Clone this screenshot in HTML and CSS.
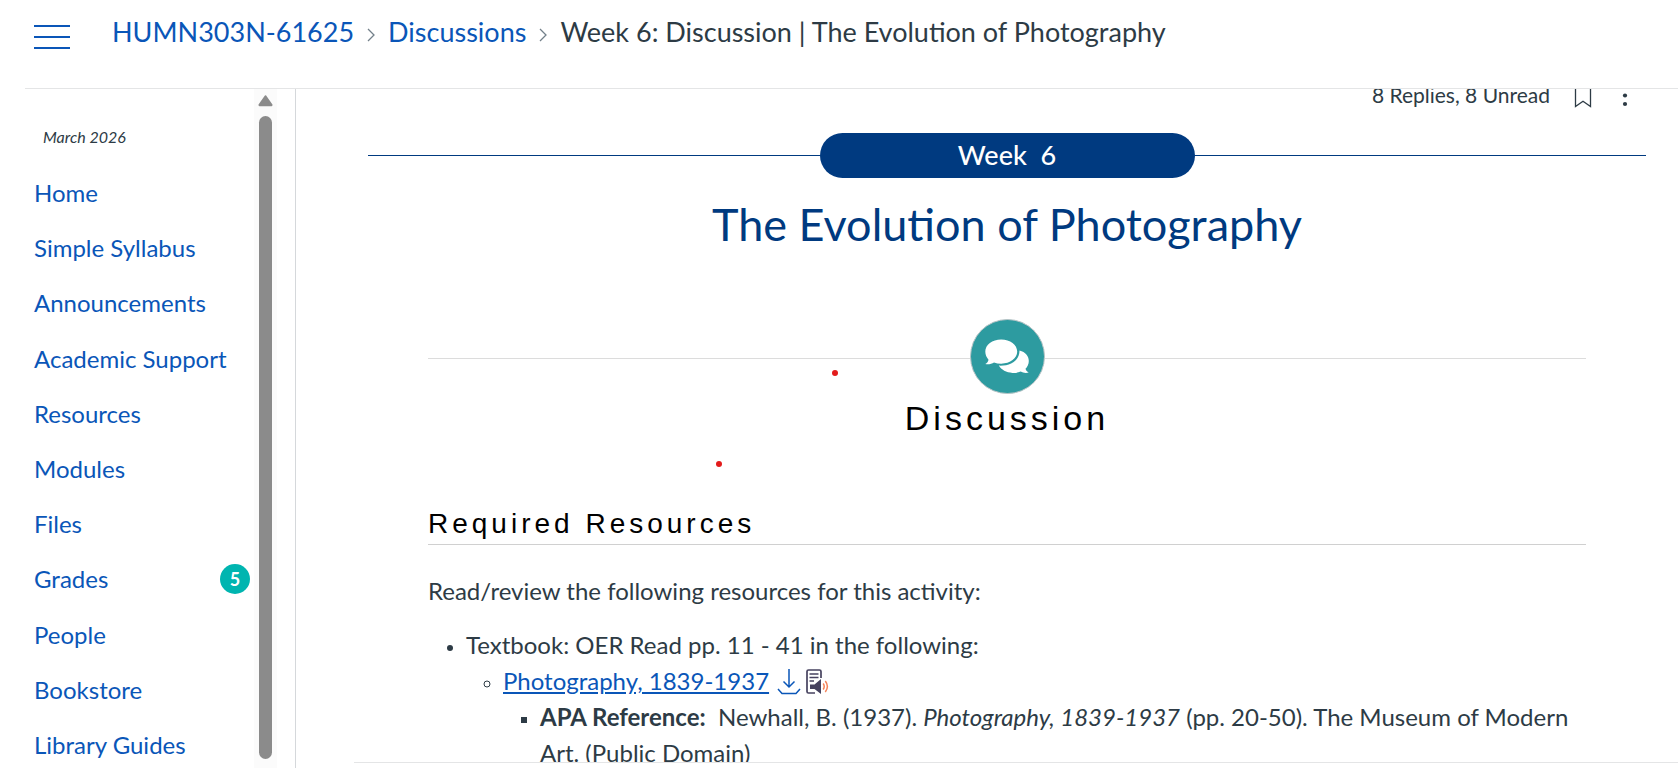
FILE: index.html
```html
<!DOCTYPE html>
<html lang="en">
<head>
<meta charset="utf-8">
<meta name="viewport" content="width=device-width, initial-scale=1">
<title>Week 6: Discussion | The Evolution of Photography</title>
<link rel="stylesheet" href="styles.css">
</head>
<body>
<header class="topbar">
  <button class="menu-button" type="button" aria-label="Toggle course navigation">
    <svg width="36" height="24" viewBox="0 0 36 24" aria-hidden="true"><path d="M0 1h36M0 12h36M0 23h36" stroke="#0a56b8" stroke-width="2"/></svg>
  </button>
  <nav class="crumbs" aria-label="Breadcrumb">
    <a href="#">HUMN303N-61625</a>
    <svg class="crumb-sep" width="8" height="14" viewBox="0 0 8 14" aria-hidden="true"><path d="M1 1l6 6-6 6" fill="none" stroke="#73808a" stroke-width="1.3"/></svg>
    <a href="#">Discussions</a>
    <svg class="crumb-sep" width="8" height="14" viewBox="0 0 8 14" aria-hidden="true"><path d="M1 1l6 6-6 6" fill="none" stroke="#73808a" stroke-width="1.3"/></svg>
    <span>Week 6: Discussion | The Evolution of Photography</span>
  </nav>
</header>
<div class="layout">
  <aside class="sidebar">
    <nav class="course-nav" aria-label="Course">
      <p class="term">March 2026</p>
      <ul class="nav-list">
        <li><a href="#">Home</a></li>
        <li><a href="#">Simple Syllabus</a></li>
        <li><a href="#">Announcements</a></li>
        <li><a href="#">Academic Support</a></li>
        <li><a href="#">Resources</a></li>
        <li><a href="#">Modules</a></li>
        <li><a href="#">Files</a></li>
        <li><a href="#">Grades <span class="count">5</span></a></li>
        <li><a href="#">People</a></li>
        <li><a href="#">Bookstore</a></li>
        <li><a href="#">Library Guides</a></li>
      </ul>
    </nav>
    <div class="scrollbar" aria-hidden="true">
      <svg width="15" height="12" viewBox="0 0 15 12"><path d="M7.5 1.6L13.3 10H1.7z" fill="#8b8b8b" stroke="#8b8b8b" stroke-width="2.4" stroke-linejoin="round"/></svg>
      <div class="thumb"></div>
    </div>
  </aside>
  <main class="content">
    <div class="topic">
      <div class="topic-bar">
        <span>8 Replies, 8 Unread</span>
        <button type="button" aria-label="Subscribe">
          <svg width="18" height="25" viewBox="0 0 18 25"><path d="M1.5 1v22.5L9 18.2l7.5 5.300V1z" fill="none" stroke="#2d3b45" stroke-width="1.3"/></svg>
        </button>
        <button type="button" aria-label="Manage discussion">
          <svg width="6" height="24" viewBox="0 0 6 24"><g fill="#2d3b45"><circle cx="3" cy="3" r="2.100"/><circle cx="3" cy="11.500" r="2.100"/><circle cx="3" cy="20" r="2.100"/></g></svg>
        </button>
      </div>
      <div class="week"><span class="week-pill">Week&nbsp; 6</span></div>
      <h1 class="title">The Evolution of Photography</h1>
      <section class="body">
        <div class="divider">
          <span class="disc">
            <svg width="44" height="35" viewBox="0 0 44 35" aria-hidden="true">
              <path fill="#fff" d="M34.500 11.500C40.500 13 43.800 17 43.800 22c0 3.200-1.300 5.800-3.300 7.800.5 1.600 1.600 2.900 3.200 3.700-2.800 1-5.800.3-8-1-2.600 1.100-5.300 1.600-8.200 1.400-6.200-.3-11.200-3-13.700-7.300 11.700.6 20.800-5.500 20.700-15.100z"/>
              <path fill="#fff" d="M16.200.5c9 0 16 5.300 16 12.100s-7 12.100-16 12.100c-2.600 0-5-.4-7.200-1.200-2.300 1.400-5.300 2.200-8.700 1.600 1.800-1 2.900-2.500 3.200-4.400C1.500 18.500.3 15.700.3 12.600.3 5.800 7.300.5 16.200.5z"/>
            </svg>
          </span>
        </div>
        <h2 class="kind">Discussion</h2>
        <h3 class="section-title">Required Resources</h3>
        <p class="intro">Read/review the following resources for this activity:</p>
        <ul class="resources">
          <li>Textbook: OER Read pp. 11 - 41 in the following:
            <ul>
              <li><a href="#">Photography, 1839-1937</a><button class="file-button download" type="button" aria-label="Download Photography, 1839-1937"><svg width="24" height="26" viewBox="0 0 24 26"><path d="M12 0v18M6.500 12.500L12 18l5.500-5.500M1 20l4 4.500h14l4-4.500" fill="none" stroke="#0a56b8" stroke-width="1.500"/></svg></button><button class="file-button" type="button" aria-label="Alternative formats"><svg width="23" height="26" viewBox="0 0 23 26"><path d="M9 24H2.500A1.500 1.500 0 0 1 1 22.500v-20A1.500 1.500 0 0 1 2.500 1h11A1.500 1.500 0 0 1 15 2.500V9M3.500 5h9M3.500 8.500h9M3.500 12H8" fill="none" stroke="#46425f" stroke-width="1.700"/><path d="M4 15.500h4.500l6.500-5.500v15l-6.500-5H4z" fill="#46425f"/><path d="M17.200 14.500q2 3 0 6M19.300 12q4.200 5.500 0 11" fill="none" stroke="#f58258" stroke-width="1.500"/></svg></button>
                <ul>
                  <li><strong>APA Reference:</strong>&nbsp; Newhall, B. (1937). <em>Photography, 1839-1937</em> (pp. 20-50). The Museum of Modern Art. (Public Domain)</li>
                </ul>
              </li>
            </ul>
          </li>
        </ul>
      </section>
      <span class="mark mark-upper"></span>
      <span class="mark mark-lower"></span>
    </div>
    <div class="content-foot"></div>
  </main>
</div>
</body>
</html>
```
FILE: styles.css
```css
* { box-sizing: border-box; }

body {
  margin: 0;
  height: 100vh;
  display: flex;
  flex-direction: column;
  overflow: hidden;
  background: #fff;
  color: #2d3b45;
  font: 24px/36px Lato, "Liberation Sans", sans-serif;
}

a { color: #0a56b8; text-decoration: none; }
button { padding: 0; border: 0; background: none; cursor: pointer; }
svg { display: block; }
h1, h2, h3, p, ul { margin: 0; padding: 0; font-weight: 400; }

.topbar {
  display: flex;
  align-items: flex-start;
  gap: 42px;
  height: 89px;
  flex: none;
  margin-left: 25px;
  padding: 15px 0 0 9px;
  border-bottom: 1px solid #e4e5e6;
}
.menu-button { margin-top: 10px; }
.crumbs {
  display: flex;
  align-items: center;
  gap: 13px;
  font-size: 27px;
  line-height: 34px;
  white-space: nowrap;
}
.crumb-sep { margin-top: 6px; }

.layout { display: flex; flex: 1; min-height: 0; }

.sidebar {
  display: flex;
  flex: none;
  width: 296px;
  padding-right: 18px;
  border-right: 1px solid #d5d8db;
}
.course-nav {
  display: flex;
  flex-direction: column;
  flex: 1;
  padding: 36px 4px 5px 34px;
}
.term {
  padding-left: 9px;
  margin-bottom: 26px;
  font-size: 16px;
  line-height: 24px;
  font-style: italic;
}
.nav-list {
  display: flex;
  flex-direction: column;
  justify-content: space-between;
  flex: 1;
  list-style: none;
}
.nav-list a {
  display: flex;
  align-items: center;
  justify-content: space-between;
}
.count {
  width: 30px;
  border-radius: 15px;
  background: #00b5b0;
  color: #fff;
  font-size: 18px;
  font-weight: 700;
  line-height: 30px;
  text-align: center;
}
.scrollbar {
  display: flex;
  flex-direction: column;
  align-items: center;
  gap: 9px;
  width: 23px;
  padding: 6px 0 9px;
  background: #fbfbfb;
}
.thumb {
  flex: 1;
  width: 13px;
  border-radius: 7px;
  background: #8b8b8b;
}

.content {
  display: flex;
  flex-direction: column;
  flex: 1;
  min-width: 0;
}
.topic {
  position: relative;
  flex: 1;
  min-height: 0;
  overflow: hidden;
  padding: 0 32px 0 72px;
}
.topic-bar {
  display: flex;
  align-items: flex-end;
  justify-content: flex-end;
  gap: 24px;
  height: 19px;
  padding-right: 18px;
  font-size: 21px;
  line-height: 26px;
}
.topic-bar button:last-child { margin-left: 6px; }
.week {
  display: grid;
  grid-template-columns: 1fr 375px 1fr;
  align-items: center;
  margin-top: 25px;
}
.week::before, .week::after {
  content: "";
  height: 1px;
  background: #003a80;
}
.week-pill {
  padding-bottom: 2px;
  border-radius: 23px;
  background: #003a80;
  color: #fff;
  font-size: 27px;
  font-weight: 500;
  line-height: 43px;
  text-align: center;
}
.title {
  margin-top: 19px;
  color: #003a80;
  font-size: 45px;
  line-height: 54px;
  text-align: center;
}
.body { padding: 0 60px; }
.divider {
  display: grid;
  grid-template-columns: 1fr 75px 1fr;
  align-items: center;
  margin-top: 68px;
}
.divider::before, .divider::after {
  content: "";
  height: 1px;
  margin-top: 4px;
  background: #dcdcdc;
}
.disc {
  display: grid;
  place-items: center;
  height: 75px;
  border: 1px solid #b9c4c6;
  border-radius: 50%;
  background: #2d9ba0;
}
.kind, .section-title {
  color: #000;
  font-family: "Liberation Sans", Arial, sans-serif;
}
.kind {
  margin-top: 2px;
  font-size: 34px;
  line-height: 44px;
  letter-spacing: 4px;
  text-align: center;
}
.section-title {
  margin-top: 66px;
  padding-bottom: 2px;
  border-bottom: 1px solid #d0d0d0;
  font-size: 28px;
  line-height: 36px;
  letter-spacing: 4px;
}
.intro { margin-top: 28px; }
.resources { margin-top: 18px; padding-left: 38px; }
.resources ul { padding-left: 37px; }
.resources li::marker { font-size: 18px; }
.resources a { text-decoration: underline; }
.file-button { display: inline-block; vertical-align: -5px; margin-left: 5px; }
.download { margin-left: 8px; }

.mark {
  position: absolute;
  width: 6px;
  height: 6px;
  border-radius: 50%;
  background: #e31b1b;
}
.mark-upper { left: 536px; top: 281px; }
.mark-lower { left: 420px; top: 372px; }

.content-foot {
  height: 6px;
  flex: none;
  margin-left: 58px;
  border-top: 1px solid #e4e5e6;
}
```
